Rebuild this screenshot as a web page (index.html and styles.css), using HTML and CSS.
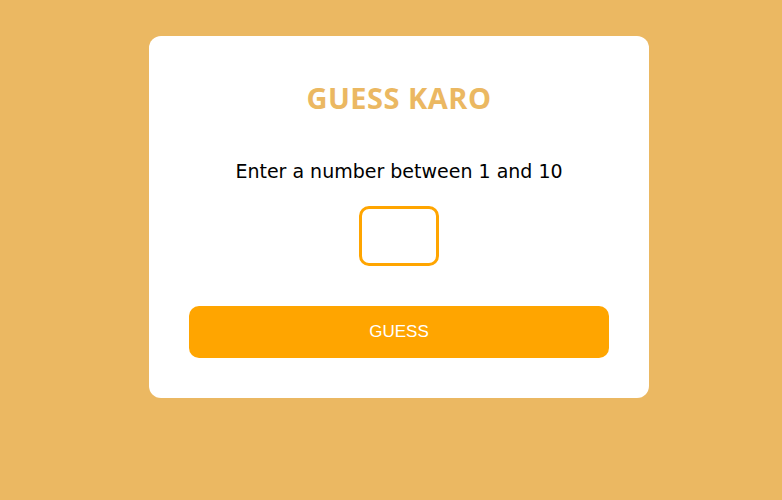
FILE: index.html
```html
<!DOCTYPE html>
<html>
<head>
<meta charset="utf-8">
<link rel="stylesheet" href="styles.css">
</head>
<body>
<div class="page">
  <div class="card">
    <h1 class="title">GUESS KARO</h1>
    <p class="prompt">Enter a number between 1 and 10</p>
    <input class="guess-input" type="text">
    <button class="guess-btn">GUESS</button>
  </div>
</div>
</body>
</html>
```
FILE: styles.css
```css
html, body {
  margin: 0;
  padding: 0;
}
body {
  background: #ebb862;
  height: 500px;
}
.page {
  display: flex;
  justify-content: center;
  padding-top: 36px;
  padding-left: 16px;
}
.card {
  width: 500px;
  box-sizing: border-box;
  background: #fff;
  border-radius: 12px;
  padding: 40px 40px 40px;
  display: flex;
  flex-direction: column;
  align-items: center;
}
.title {
  margin: 0;
  font-family: "Open Sans", sans-serif;
  font-weight: 700;
  font-size: 29px;
  letter-spacing: 0.5px;
  line-height: 44px;
  color: #ebb862;
}
.prompt {
  margin: 39px 0 0;
  font-family: "DejaVu Sans", sans-serif;
  font-size: 19px;
  line-height: 24px;
  color: #000;
}
.guess-input {
  margin-top: 23px;
  width: 80px;
  height: 60px;
  box-sizing: border-box;
  border: 3px solid #ffa500;
  border-radius: 10px;
  outline: none;
}
.guess-btn {
  margin-top: 40px;
  width: 420px;
  height: 52px;
  border: none;
  border-radius: 10px;
  background: #ffa500;
  color: #fff;
  font-family: "Liberation Sans", Arial, sans-serif;
  font-size: 17px;
}
```
